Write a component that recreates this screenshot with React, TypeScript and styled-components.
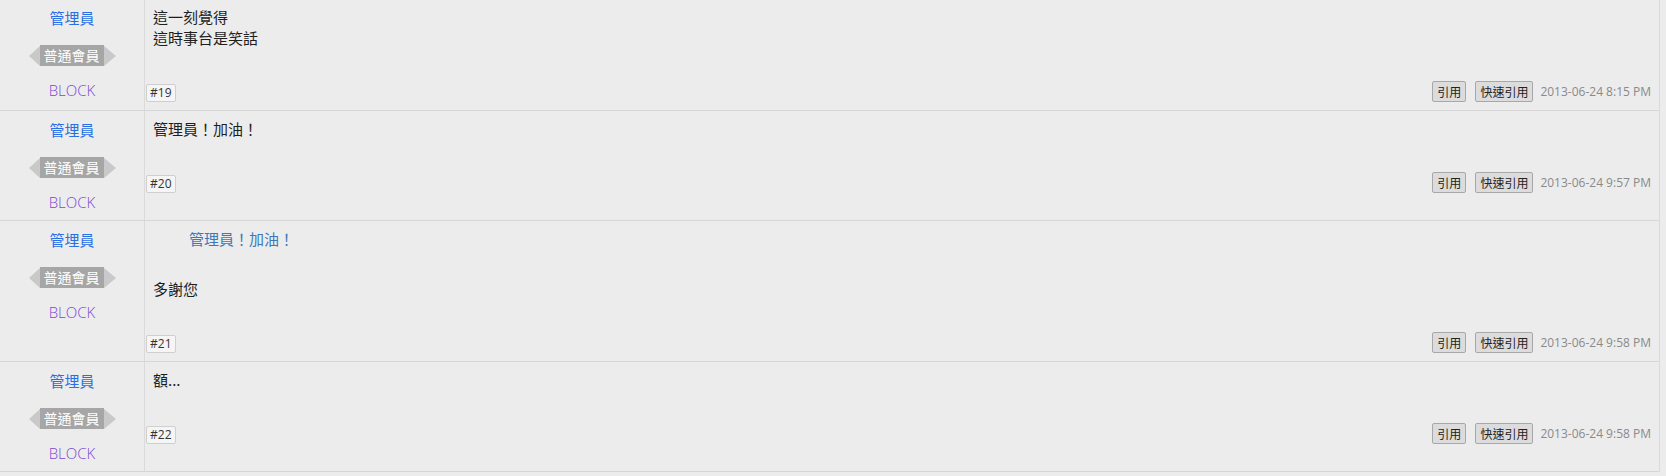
import React from 'react';
import styled, { createGlobalStyle } from 'styled-components';

const Global = createGlobalStyle`
  html, body { margin: 0; padding: 0; background: #ececec; }
  body {
    font-family: "Open Sans", "Noto Sans CJK TC", sans-serif;
    color: #222;
    overflow: hidden;
  }
`;

const Thread = styled.div`
  width: 1659px;
  margin-top: -1px;
  border-right: 1px solid #dadada;
`;

const Post = styled.div`
  display: grid;
  grid-template-columns: 145px 1fr;
  border-bottom: 1px solid #d6d6d6;
`;

const Author = styled.div`
  display: flex;
  flex-direction: column;
  align-items: center;
  padding: 8px 0 7px;
  border-right: 1px solid #dadada;
`;

const Name = styled.div`
  font-family: "Noto Sans CJK TC", sans-serif;
  font-size: 15px;
  line-height: 21px;
  color: #2a70e4;
`;

const Rank = styled.div`
  display: flex;
  align-items: center;
  margin-top: 17px;
  height: 21px;
  &::before, &::after {
    content: "";
    width: 0;
    height: 0;
    border-top: 10.5px solid transparent;
    border-bottom: 10.5px solid transparent;
  }
  &::before { border-right: 11px solid #c9c9c9; }
  &::after { border-left: 12px solid #c9c9c9; }
`;

const RankLabel = styled.span`
  display: block;
  height: 21px;
  line-height: 21px;
  padding: 0 4px;
  background: #a6a6a6;
  color: #fff;
  font-family: "Noto Sans CJK TC", sans-serif;
  font-size: 14px;
`;

const Group = styled.div`
  margin-top: 14px;
  font-family: "Open Sans", sans-serif;
  font-weight: 300;
  font-size: 15px;
  line-height: 21px;
  color: #7a48d6;
`;

const Body = styled.div`
  display: flex;
  flex-direction: column;
  min-width: 0;
`;

const Message = styled.div`
  padding: 7px 8px 0 8px;
  font-family: "Noto Sans CJK TC", sans-serif;
  font-size: 15px;
  line-height: 21px;
  color: #1e1e1e;
`;

const Quote = styled.blockquote`
  margin: 0 0 29px 36px;
  color: #3d78b8;
`;

const Footer = styled.div`
  display: flex;
  align-items: flex-end;
  margin-top: 33px;
  padding: 0 8px 8px 1px;
`;

const Floor = styled.span`
  display: block;
  height: 16px;
  line-height: 16px;
  padding: 0 3px;
  border: 1px solid #cfcfcf;
  border-radius: 2px;
  background: #f5f5f5;
  font-family: "Open Sans", sans-serif;
  font-size: 12px;
  color: #333;
`;

const Actions = styled.div`
  display: flex;
  align-items: center;
  margin-left: auto;
  height: 21px;
`;

const ActionButton = styled.button`
  height: 21px;
  margin: 0 9px 0 0;
  padding: 0 4px;
  border: 1px solid #a8a8a8;
  border-radius: 2px;
  background: #dcdcdc;
  font-family: "Noto Sans CJK TC", sans-serif;
  font-size: 12px;
  line-height: 19px;
  color: #222;
  &:last-of-type { margin-right: 7px; }
`;

const Time = styled.span`
  font-family: "Open Sans", sans-serif;
  font-size: 12px;
  line-height: 21px;
  color: #8a8a8a;
`;

type PostData = {
  floor: number;
  time: string;
  quote?: string;
  lines: string[];
};

const posts: PostData[] = [
  { floor: 19, time: '2013-06-24 8:15 PM', lines: ['這一刻覺得', '這時事台是笑話'] },
  { floor: 20, time: '2013-06-24 9:57 PM', lines: ['管理員！加油！'] },
  { floor: 21, time: '2013-06-24 9:58 PM', quote: '管理員！加油！', lines: ['多謝您'] },
  { floor: 22, time: '2013-06-24 9:58 PM', lines: ['額...'] },
];

export default function App() {
  return (
    <>
      <Global />
      <Thread>
        {posts.map((p) => (
          <Post key={p.floor}>
            <Author>
              <Name>管埋員</Name>
              <Rank>
                <RankLabel>普通會員</RankLabel>
              </Rank>
              <Group>BLOCK</Group>
            </Author>
            <Body>
              <Message>
                {p.quote && <Quote>{p.quote}</Quote>}
                {p.lines.map((l, i) => (
                  <div key={i}>{l}</div>
                ))}
              </Message>
              <Footer>
                <Floor>#{p.floor}</Floor>
                <Actions>
                  <ActionButton>引用</ActionButton>
                  <ActionButton>快速引用</ActionButton>
                  <Time>{p.time}</Time>
                </Actions>
              </Footer>
            </Body>
          </Post>
        ))}
      </Thread>
    </>
  );
}
